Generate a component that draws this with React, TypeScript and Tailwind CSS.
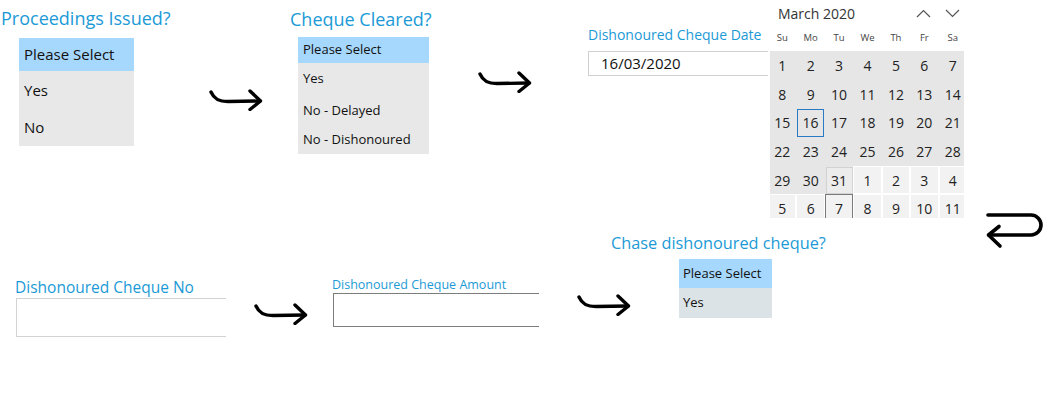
import React from 'react'

const FONT = "font-['Open_Sans','Noto_Sans',sans-serif]"

// hand-drawn style "hook" arrow between steps
function HookArrow({ className }: { className: string }) {
  return (
    <svg className={`absolute ${className}`} width="54" height="24" viewBox="0 0 54 24" fill="none">
      <path d="M2 5 C5 12 10 14.5 19 14.5 L51 14" stroke="#000" strokeWidth="3.4" strokeLinecap="round" />
      <path d="M41 4 L51.5 14 L41 22.5" stroke="#000" strokeWidth="3.4" strokeLinecap="round" strokeLinejoin="round" />
    </svg>
  )
}

function ReturnArrow() {
  return (
    <svg className="absolute left-[984px] top-[211px]" width="64" height="40" viewBox="0 0 64 40" fill="none">
      <path d="M4 4 L47 4 A10 10 0 0 1 47 24 L5 24" stroke="#000" strokeWidth="3.6" strokeLinecap="round" />
      <path d="M15 15.5 L4.5 24 L16 35" stroke="#000" strokeWidth="3.6" strokeLinecap="round" strokeLinejoin="round" />
    </svg>
  )
}

function Dropdown({
  items,
  rowHeights,
  className,
  textClass,
  restBg,
}: {
  items: string[]
  rowHeights: string[]
  className: string
  textClass: string
  restBg: string
}) {
  return (
    <div className={`flex flex-col ${className}`}>
      {items.map((item, i) => (
        <div
          key={item}
          className={`flex items-center ${rowHeights[i]} ${i === 0 ? 'bg-[#a6d7fd]' : restBg} ${textClass} text-[#111]`}
        >
          {item}
        </div>
      ))}
    </div>
  )
}

const march = Array.from({ length: 31 }, (_, i) => i + 1)
const april = Array.from({ length: 11 }, (_, i) => i + 1)

function Calendar() {
  return (
    <div className="w-[200px] bg-white">
      <div className="flex h-[26px] items-center justify-between pl-[10px] pr-[8px]">
        <span className="text-[14px] text-[#333]">March 2020</span>
        <div className="flex items-center gap-[14px]">
          <svg width="15" height="9" viewBox="0 0 15 9" fill="none">
            <path d="M1 8 L7.5 1.5 L14 8" stroke="#555" strokeWidth="1.2" />
          </svg>
          <svg width="15" height="9" viewBox="0 0 15 9" fill="none">
            <path d="M1 1 L7.5 7.5 L14 1" stroke="#555" strokeWidth="1.2" />
          </svg>
        </div>
      </div>
      <div className="grid h-[25px] w-[199px] grid-cols-7 items-center text-center text-[9.5px] text-[#444]">
        {['Su', 'Mo', 'Tu', 'We', 'Th', 'Fr', 'Sa'].map((d) => (
          <span key={d}>{d}</span>
        ))}
      </div>
      <div className="ml-[2px] h-[167px] w-[194px] overflow-hidden">
        <div className="-ml-[2px] grid w-[199px] grid-cols-7 text-[14px] text-[#222]">
          {march.map((d) => (
            <div key={`m${d}`} className="flex h-[28.7px] items-center justify-center bg-[#e6e6e6]">
              {d === 16 ? (
                <span className="flex h-[28px] w-[27px] items-center justify-center border-[1.5px] border-[#2a79c4]">16</span>
              ) : d === 31 ? (
                <span className="flex h-[27px] w-[27px] items-center justify-center border border-[#d2d2d2] bg-[#ececec]">31</span>
              ) : (
                d
              )}
            </div>
          ))}
          {april.map((d) => (
            <div
              key={`a${d}`}
              className={`flex h-[28.7px] items-center justify-center border border-white bg-[#f2f2f2] ${d === 7 ? 'outline-[1.5px] outline-[#7a7a7a] -outline-offset-1' : ''}`}
            >
              {d}
            </div>
          ))}
        </div>
      </div>
    </div>
  )
}

export default function App() {
  return (
    <div className={`relative h-[404px] w-[1049px] overflow-hidden bg-white ${FONT}`}>
      {/* Proceedings Issued? */}
      <div className="absolute left-[1px] top-[5px] flex flex-col">
        <span className="text-[18px] leading-[27px] text-[#1b9ad6]">Proceedings Issued?</span>
        <Dropdown
          items={['Please Select', 'Yes', 'No']}
          rowHeights={['h-[33px]', 'h-[38px]', 'h-[37px]']}
          className="ml-[18px] mt-[6px] w-[115px]"
          textClass="pl-[5px] text-[15px]"
          restBg="bg-[#e8e8e8]"
        />
      </div>
      <HookArrow className="left-[209px] top-[87px]" />

      {/* Cheque Cleared? */}
      <div className="absolute left-[290px] top-[6px] flex flex-col">
        <span className="text-[18px] leading-[27px] text-[#1b9ad6]">Cheque Cleared?</span>
        <Dropdown
          items={['Please Select', 'Yes', 'No - Delayed', 'No - Dishonoured']}
          rowHeights={['h-[26px]', 'h-[32px]', 'h-[31px]', 'h-[28px]']}
          className="ml-[8px] mt-[4px] w-[131px]"
          textClass="pl-[5px] text-[13px]"
          restBg="bg-[#e8e8e8]"
        />
      </div>
      <HookArrow className="left-[478px] top-[69px]" />

      {/* Dishonoured Cheque Date + open calendar */}
      <div className="absolute left-[588px] top-0 flex items-start">
        <div className="mt-[25px] flex flex-col">
          <span className="text-[14px] leading-[20px] text-[#1b9ad6]">Dishonoured Cheque Date</span>
          <div className="mt-[6px] flex h-[25px] w-[190px] items-center border border-[#d0d0d0] pl-[12px] text-[15px] text-[#111]">
            16/03/2020
          </div>
        </div>
        <div className="-ml-[10px]">
          <Calendar />
        </div>
      </div>
      <ReturnArrow />

      {/* Dishonoured Cheque No */}
      <div className="absolute left-[15px] top-[276px] flex flex-col">
        <span className="text-[15.5px] leading-[22px] text-[#1b9ad6]">Dishonoured Cheque No</span>
        <div className="ml-[1px] h-[39px] w-[210px] border border-r-0 border-[#d3d3d3]" />
      </div>
      <HookArrow className="left-[254px] top-[301px]" />

      {/* Dishonoured Cheque Amount */}
      <div className="absolute left-[332px] top-[276px] flex flex-col">
        <span className="text-[12.5px] leading-[17px] text-[#1b9ad6]">Dishonoured Cheque Amount</span>
        <div className="ml-[1px] h-[34px] w-[206px] border border-r-0 border-[#7d7d7d]" />
      </div>
      <HookArrow className="left-[577px] top-[292px]" />

      {/* Chase dishonoured cheque? */}
      <div className="absolute left-[611px] top-[231px] flex flex-col">
        <span className="text-[16.3px] leading-[24px] text-[#1b9ad6]">Chase dishonoured cheque?</span>
        <Dropdown
          items={['Please Select', 'Yes']}
          rowHeights={['h-[29px]', 'h-[30px]']}
          className="ml-[68px] mt-[4px] w-[93px]"
          textClass="pl-[4px] text-[13px]"
          restBg="bg-[#dce3e6]"
        />
      </div>
    </div>
  )
}
